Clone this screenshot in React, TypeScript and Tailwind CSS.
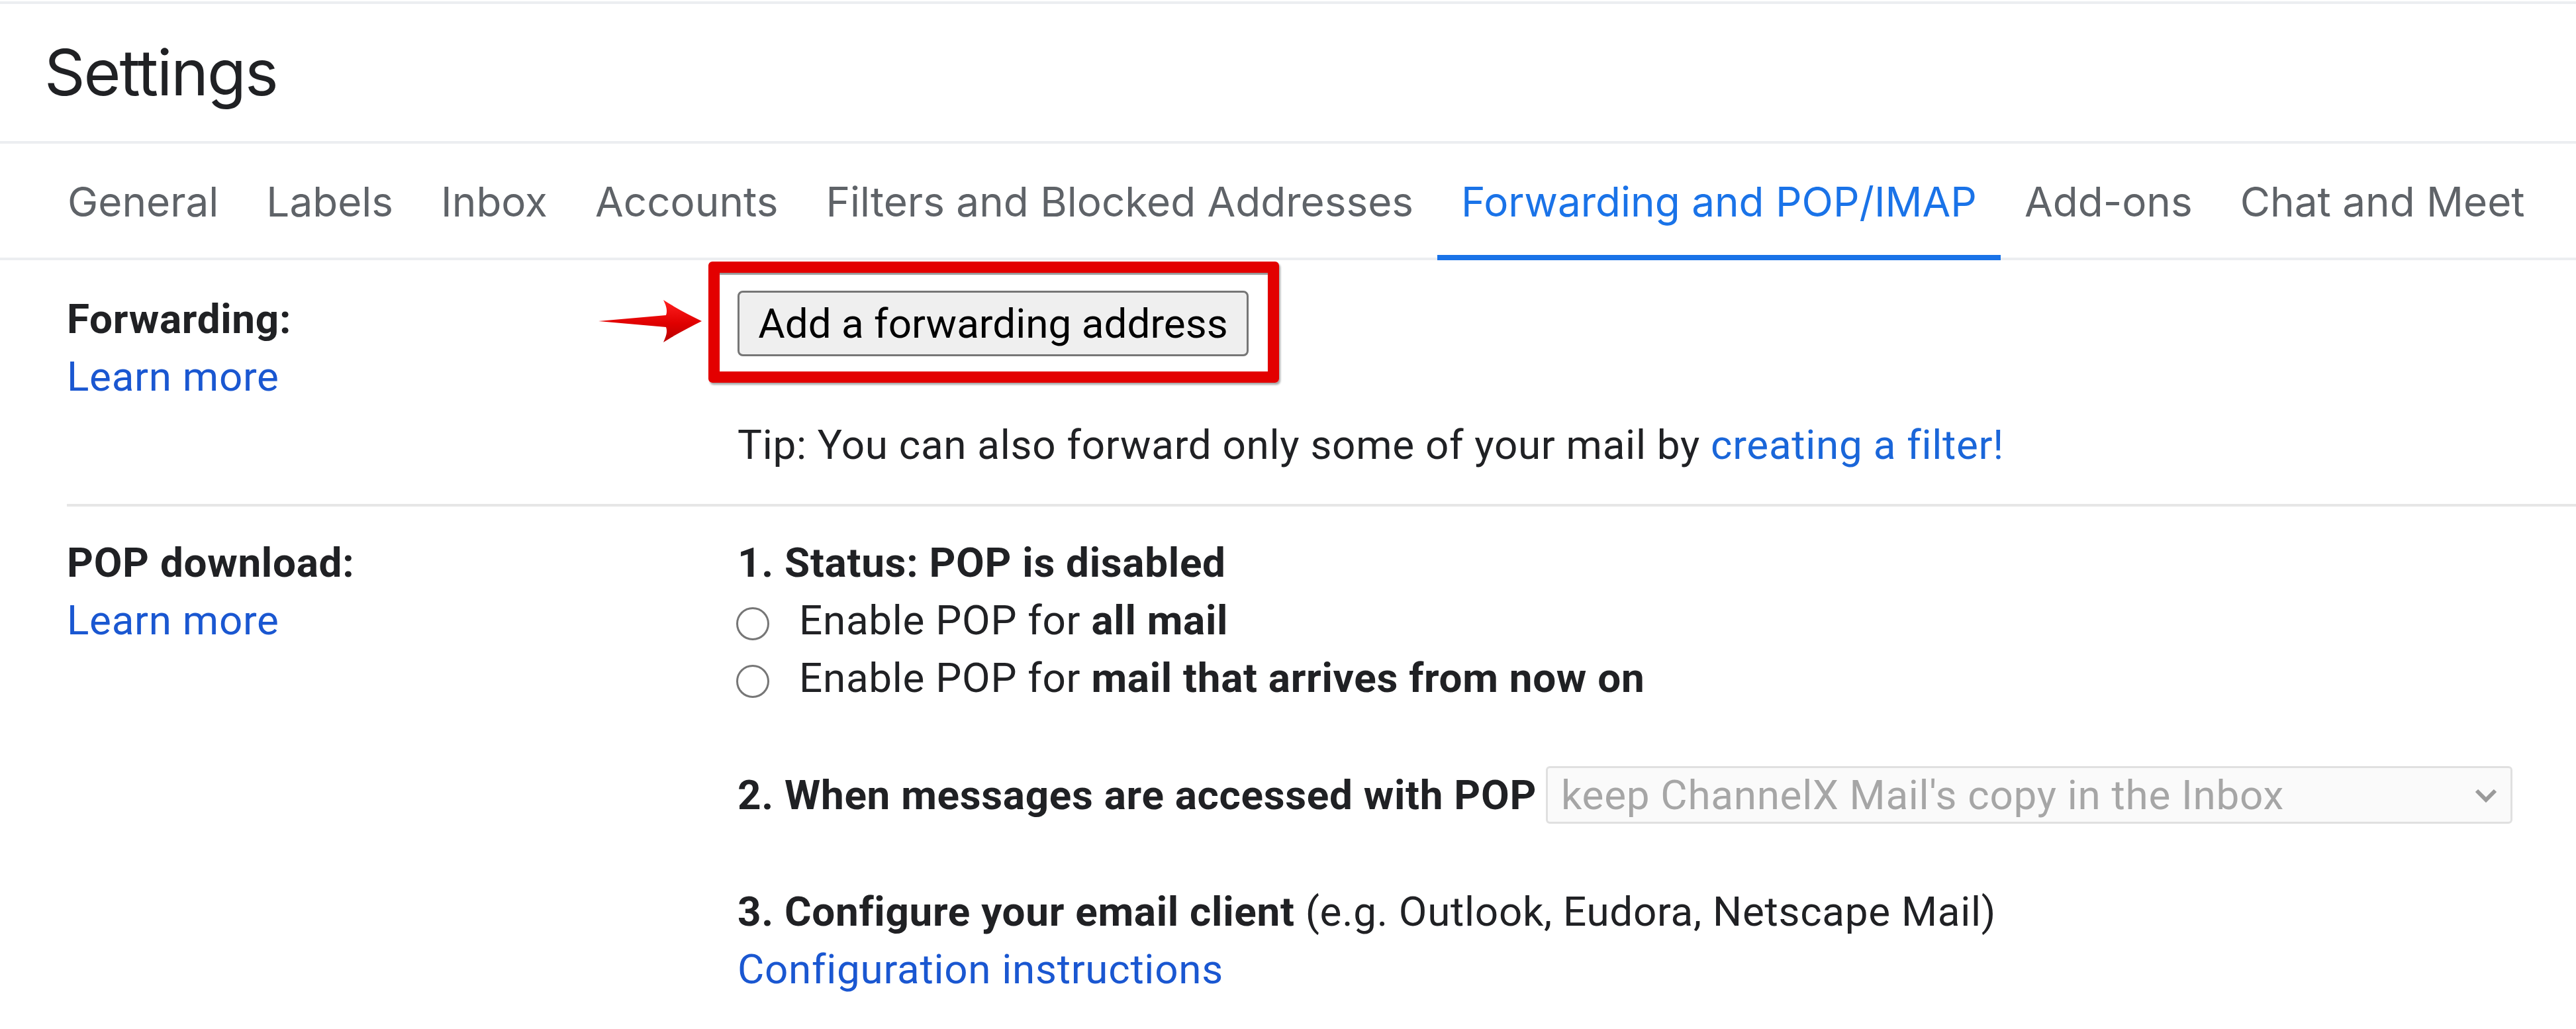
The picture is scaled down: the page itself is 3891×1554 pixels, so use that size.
import React from 'react';

const tabs = [
    'General',
    'Labels',
    'Inbox',
    'Accounts',
    'Filters and Blocked Addresses',
    'Forwarding and POP/IMAP',
    'Add-ons',
    'Chat and Meet',
];

const ACTIVE_TAB = 'Forwarding and POP/IMAP';

const Arrow: React.FC = () => (
    <svg
        className="absolute left-[-210px] top-[13px]"
        width="157"
        height="66"
        viewBox="0 0 157 66"
    >
        <defs>
            <linearGradient id="arrowFill" x1="0" y1="0" x2="0" y2="1">
                <stop offset="0" stopColor="#ff2020" />
                <stop offset="0.55" stopColor="#e00000" />
                <stop offset="1" stopColor="#b80000" />
            </linearGradient>
        </defs>
        <path
            d="M0 33 L102 24 C105 16 101 7 98 1 C118 14 138 24 156 33 C138 42 118 52 98 65 C101 58 105 50 102 42 Z"
            fill="url(#arrowFill)"
        />
    </svg>
);

const Radio: React.FC = () => (
    <span className="ml-[-2px] mr-[45px] mt-[11px] inline-block h-[50px] w-[50px] shrink-0 rounded-full border-[3px] border-[#767676] bg-white" />
);

const App: React.FC = () => {
    return (
        <div className="h-[1554px] w-[3891px] overflow-hidden bg-white font-[Roboto,sans-serif] text-[62px] leading-[87px] tracking-[0.7px] text-[#202124]">
            <div className="mt-[2px] h-[4px] bg-[#eceef1]" />

            {/* Page title */}
            <div className="flex h-[207px] items-center pl-[67px] font-[Inter,sans-serif] text-[96px] font-normal tracking-[-2px] text-[#202124]">
                Settings
            </div>
            <div className="h-[4px] bg-[#eceef1]" />

            {/* Tabs */}
            <nav className="flex h-[176px] whitespace-nowrap border-b-4 border-[#eceef1] pl-[66px] font-[Inter,sans-serif] text-[62px] tracking-normal">
                {tabs.map(tab => (
                    <div
                        key={tab}
                        className={
                            tab === ACTIVE_TAB
                                ? '-mb-[4px] flex h-[176px] shrink-0 items-center border-b-[8px] border-[#1a73e8] px-[36px] pt-[6px] text-[#1a73e8]'
                                : '-mb-[4px] flex h-[176px] shrink-0 items-center border-b-[8px] border-transparent px-[36px] pt-[6px] text-[#5f6368]'
                        }
                    >
                        {tab}
                    </div>
                ))}
            </nav>

            {/* Forwarding */}
            <div className="ml-[101px] grid grid-cols-[1013px_1fr] border-b-4 border-[#e6e6e6] pb-[46px] pt-[45px]">
                <div>
                    <div className="font-bold">Forwarding:</div>
                    <a className="text-[#1a57d1]">Learn more</a>
                </div>
                <div>
                    <div className="relative mt-[1px] w-[772px]">
                        <button className="flex h-[99px] w-[772px] items-center justify-center rounded-[8px] border-[3px] border-[#767676] bg-[#efefef] text-[62px] tracking-normal text-black">
                            Add a forwarding address
                        </button>
                        <div className="absolute bottom-[-40px] left-[-44px] right-[-46px] top-[-44px] rounded-[6px] border-[17px] border-[#e30000] shadow-[2px_3px_3px_rgba(0,0,0,0.35),inset_0_3px_1px_rgba(0,0,0,0.4)]" />
                        <Arrow />
                    </div>
                    <p className="mt-[90px] whitespace-nowrap">
                        Tip: You can also forward only some of your mail by{' '}
                        <a className="text-[#1a66d9]">creating a filter!</a>
                    </p>
                </div>
            </div>

            {/* POP download */}
            <div className="ml-[101px] grid grid-cols-[1013px_1fr] pt-[41px]">
                <div>
                    <div className="font-bold">POP download:</div>
                    <a className="text-[#1a57d1]">Learn more</a>
                </div>
                <div className="whitespace-nowrap">
                    <div className="font-bold">1. Status: POP is disabled</div>
                    <div className="flex h-[87px] items-center">
                        <Radio />
                        <span>
                            Enable POP for <b className="font-bold">all mail</b>
                        </span>
                    </div>
                    <div className="flex h-[87px] items-center">
                        <Radio />
                        <span>
                            Enable POP for <b className="font-bold">mail that arrives from now on</b>
                        </span>
                    </div>

                    <div className="mt-[90px] flex h-[87px] items-center">
                        <span className="font-bold">2. When messages are accessed with POP</span>
                        <div className="ml-[14px] flex h-[87px] w-[1460px] items-center justify-between rounded-[6px] border-[3px] border-[#e0e0e0] bg-[#fafafa] pl-[20px] pr-[19px] text-[#a6a6a6]">
                            <span>keep ChannelX Mail's copy in the Inbox</span>
                            <svg width="36" height="22" viewBox="0 0 36 22">
                                <polyline
                                    points="4,4 18,18 32,4"
                                    fill="none"
                                    stroke="#9a9a9a"
                                    strokeWidth="6"
                                />
                            </svg>
                        </div>
                    </div>

                    <div className="mt-[89px]">
                        <span className="font-bold">3. Configure your email client</span> (e.g. Outlook, Eudora, Netscape Mail)
                    </div>
                    <a className="text-[#1a57d1]">Configuration instructions</a>
                </div>
            </div>
        </div>
    );
};

export default App;
